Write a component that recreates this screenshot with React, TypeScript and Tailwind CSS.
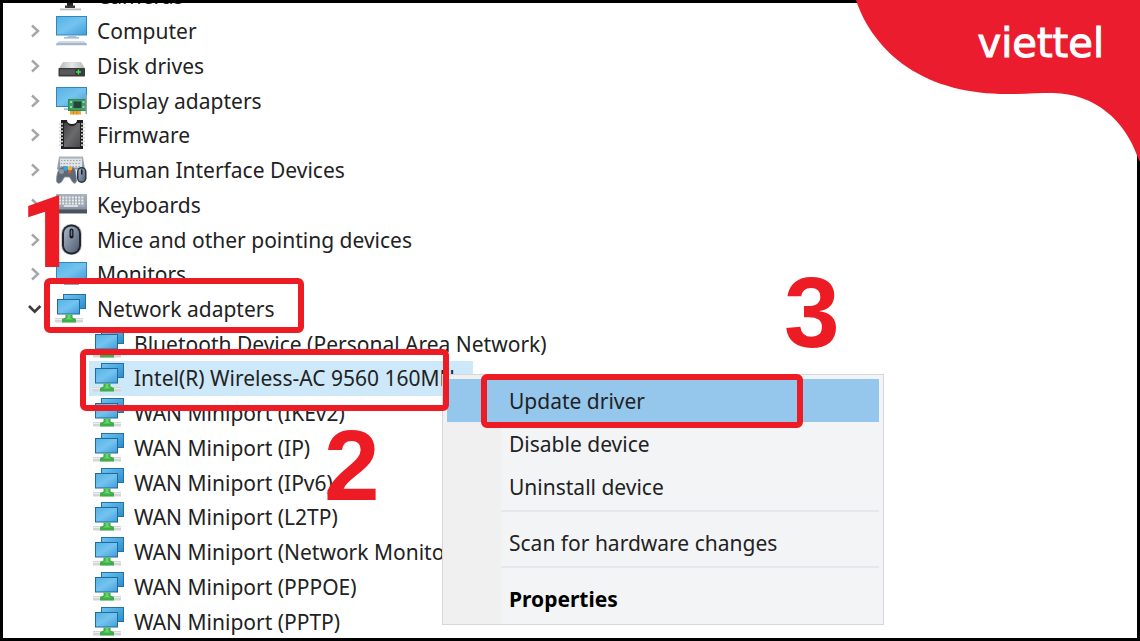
import React from "react";

const Defs = () => (
  <svg className="absolute size-0" aria-hidden="true">
    <defs>
      <linearGradient id="screen" x1="0" y1="0" x2="1" y2="1">
        <stop offset="0" stopColor="#56b4e6" />
        <stop offset="0.5" stopColor="#74c3ef" />
        <stop offset="1" stopColor="#429fda" />
      </linearGradient>
      <linearGradient id="back" x1="0" y1="0" x2="1" y2="1">
        <stop offset="0" stopColor="#6cc3ef" />
        <stop offset="1" stopColor="#2d8ccb" />
      </linearGradient>
      <linearGradient id="metal" x1="0" y1="0" x2="1" y2="0">
        <stop offset="0" stopColor="#b5b8ba" />
        <stop offset="0.5" stopColor="#e6e8e9" />
        <stop offset="1" stopColor="#b5b8ba" />
      </linearGradient>
      <linearGradient id="steel" x1="0" y1="0" x2="0" y2="1">
        <stop offset="0" stopColor="#a9b4be" />
        <stop offset="1" stopColor="#8793a0" />
      </linearGradient>
      <linearGradient id="mouse" x1="0" y1="0" x2="1" y2="1">
        <stop offset="0" stopColor="#a9b8c8" />
        <stop offset="1" stopColor="#4d5d70" />
      </linearGradient>
      <linearGradient id="chip" x1="0" y1="0" x2="1" y2="1">
        <stop offset="0" stopColor="#3f3f41" />
        <stop offset="0.5" stopColor="#6b6b6e" />
        <stop offset="1" stopColor="#4a4a4c" />
      </linearGradient>
    </defs>
  </svg>
);

const Icon = ({ children }: { children: React.ReactNode }) => (
  <svg viewBox="0 0 32 32" className="size-8 shrink-0" aria-hidden="true">
    {children}
  </svg>
);

const CameraIcon = () => (
  <Icon>
    <rect x="12" y="20" width="6" height="8" fill="#222" />
    <path d="M10 25.500h10v2.500h-10z" fill="#3a3a3a" />
    <path d="M5 28.500h21v1.800h-21z" fill="#b9bcbf" />
  </Icon>
);

const ComputerIcon = () => (
  <Icon>
    <rect x="1" y="1" width="31" height="19.500" fill="#3187bd" />
    <rect x="2" y="2" width="29" height="17.500" fill="url(#screen)" />
    <path d="M13 21h8l1 1.300h-10z" fill="#aac3d6" />
    <rect x="9" y="22.300" width="15" height="1.200" fill="#86a9c4" />
    <path d="M4 26.500h25l3 2.500v1.200h-31v-1.200z" fill="#a5b6ca" />
    <path d="M4 26.500h25l2 1.500h-29z" fill="#cdd8e4" />
  </Icon>
);

const DiskIcon = () => (
  <Icon>
    <path d="M8 12h18l4 6.500h-26z" fill="url(#metal)" />
    <rect x="3.500" y="18" width="26.500" height="8.500" rx="0.800" fill="#3a3b3c" />
    <rect x="5" y="19.300" width="15" height="5.500" fill="#575859" />
    <path d="M23.500 19.500v5M21 22h5" stroke="#3ee04a" strokeWidth="1.500" />
  </Icon>
);

const DisplayIcon = () => (
  <Icon>
    <rect x="1" y="2" width="31" height="20" fill="#3187bd" />
    <rect x="2" y="3" width="29" height="18" fill="url(#screen)" />
    <rect x="9" y="23.500" width="7" height="1.300" fill="#86a9c4" />
    <rect x="13" y="14" width="18" height="12" fill="#2f8a55" />
    <rect x="14" y="15" width="16" height="10" fill="#3da068" />
    <rect x="18.500" y="16.500" width="8" height="6.500" fill="#27433a" />
    <path d="M15 17h2M15 22h2M27.500 17h2M27.500 22h2" stroke="#b9e3c4" strokeWidth="1.500" />
    <rect x="15" y="26" width="11" height="3.500" fill="#f0a52e" />
    <path d="M18.500 26v3.500M22 26v3.500" stroke="#c97b18" strokeWidth="0.800" />
    <rect x="30.500" y="10" width="1.500" height="19" fill="#9aa2a6" />
  </Icon>
);

const FirmwareIcon = () => (
  <Icon>
    <path d="M6 1h6q0 4 5 4t5-4h6v29h-22z" fill="#202021" />
    <path d="M9 4h3q1.500 3 5 3t5-3h3v24h-16z" fill="url(#chip)" />
    <path
      d="M4 5h4M4 8.500h4M4 12h4M4 15.500h4M4 19h4M4 22.500h4M4 26h4M26 5h4M26 8.500h4M26 12h4M26 15.500h4M26 19h4M26 22.500h4M26 26h4"
      stroke="#d0d2d3"
      strokeWidth="1.400"
    />
  </Icon>
);

const HidIcon = () => (
  <Icon>
    <path d="M4 2.500h24l2 13h-28z" fill="url(#steel)" />
    <rect x="5" y="4.500" width="22" height="9" fill="#dfe3e6" />
    <path
      d="M6 6.500h20M5.500 9.500h21M5.500 12.500h21"
      stroke="#9ba6b0"
      strokeWidth="1"
      strokeDasharray="1.500 1.500"
    />
    <path
      d="M5 14q4-3 7 0q4-2 7 0q2 2 2.500 13q-1 4-4 1l-3-5h-5l-3 5q-4 3-5-1q0-9 3.500-13z"
      fill="#5d6976"
      stroke="#8793a0"
      strokeWidth="0.800"
    />
    <circle cx="6.500" cy="17.500" r="2.500" fill="#8b9aa9" />
    <circle cx="10.500" cy="14.500" r="2.400" fill="#36a0e0" />
    <circle cx="15" cy="14.500" r="2.200" fill="#f0b431" />
    <circle cx="14.500" cy="18" r="1.800" fill="#d9573b" />
    <rect x="22" y="13" width="9.500" height="16" rx="4.700" fill="#2c3541" />
    <rect x="23.500" y="14.500" width="6.500" height="13" rx="3.200" fill="url(#mouse)" />
    <rect x="26" y="15.500" width="1.600" height="5" fill="#1d242d" />
  </Icon>
);

const KeyboardIcon = () => (
  <Icon>
    <path d="M1 5h31v16h-31z" fill="url(#steel)" />
    <path d="M3 7h27v11h-27z" fill="#9faab4" />
    <g stroke="#eef1f3" strokeWidth="2" strokeDasharray="2 1.200">
      <path d="M4 8.500h25M4 11.500h25M4 14.500h25" />
    </g>
    <path d="M9 17h14" stroke="#eef1f3" strokeWidth="1.500" />
    <path d="M1 20.500h31v4h-31z" fill="#4b545e" />
  </Icon>
);

const MouseIcon = () => (
  <Icon>
    <rect x="6" y="0" width="21" height="31" rx="9.500" fill="#c9ccd0" />
    <rect x="7" y="0.500" width="19" height="30" rx="9" fill="#22262c" />
    <rect x="9" y="2.500" width="15" height="26" rx="7" fill="url(#mouse)" />
    <rect x="14.500" y="4.500" width="4" height="10" rx="2" fill="#171b21" />
    <rect x="15.800" y="6" width="1.400" height="6" rx="0.700" fill="#6d7d8f" />
  </Icon>
);

const MonitorIcon = () => (
  <Icon>
    <rect x="1" y="4" width="31" height="19.500" fill="#3187bd" />
    <rect x="2" y="5" width="29" height="17.500" fill="url(#screen)" />
    <rect x="9" y="25.500" width="15" height="1.500" fill="#86a9c4" />
  </Icon>
);

const NetworkIcon = () => (
  <Icon>
    <rect x="8" y="1" width="23" height="15" fill="#2272a8" />
    <rect x="9" y="2" width="21" height="13" fill="url(#back)" />
    <rect x="2" y="6" width="23" height="15.500" fill="#1f6a9e" />
    <rect x="3" y="7" width="21" height="13.500" fill="url(#screen)" />
    <rect x="0" y="25" width="28" height="4.500" fill="#d3d6d7" />
    <path d="M0 26.500h28" stroke="#eceeef" strokeWidth="1" />
    <path d="M10.500 21.500h7v3l3.500 1.500v3.500h-14v-3.500l3.500-1.500z" fill="#3fae49" />
    <path d="M12.500 22h3v3l2.500 1.500h-8l2.500-1.500z" fill="#69d26a" />
  </Icon>
);

const Chevron = ({ open }: { open?: boolean }) => (
  <svg viewBox="0 0 16 16" className="size-4" fill="none" aria-hidden="true">
    {open ? (
      <path d="M1 5l5.700 5.700L12.400 5" stroke="#3c3c3c" strokeWidth="2.600" />
    ) : (
      <path d="M4 2.500l6 5.500L4 13.500" stroke="#a6a6a6" strokeWidth="2.400" />
    )}
  </svg>
);

const categories: { label: string; Glyph: React.FC; open?: boolean }[] = [
  { label: "Cameras", Glyph: CameraIcon },
  { label: "Computer", Glyph: ComputerIcon },
  { label: "Disk drives", Glyph: DiskIcon },
  { label: "Display adapters", Glyph: DisplayIcon },
  { label: "Firmware", Glyph: FirmwareIcon },
  { label: "Human Interface Devices", Glyph: HidIcon },
  { label: "Keyboards", Glyph: KeyboardIcon },
  { label: "Mice and other pointing devices", Glyph: MouseIcon },
  { label: "Monitors", Glyph: MonitorIcon },
  { label: "Network adapters", Glyph: NetworkIcon, open: true },
];

const selected = "Intel(R) Wireless-AC 9560 160MHz";

const adapters = [
  "Bluetooth Device (Personal Area Network)",
  selected,
  "WAN Miniport (IKEv2)",
  "WAN Miniport (IP)",
  "WAN Miniport (IPv6)",
  "WAN Miniport (L2TP)",
  "WAN Miniport (Network Monitor)",
  "WAN Miniport (PPPOE)",
  "WAN Miniport (PPTP)",
];

const DeviceTree = () => (
  <ul className="-mt-[21px] grid h-[660px] auto-rows-fr pl-7">
    {categories.map(({ label, Glyph, open }) => (
      <li key={label} className="flex items-center">
        <button aria-label={label} aria-expanded={!!open} className="mr-[11px] flex">
          <Chevron open={open} />
        </button>
        <Glyph />
        <span className="pl-2.5 whitespace-nowrap">{label}</span>
      </li>
    ))}
    {adapters.map((label) => (
      <li key={label} className="flex items-center pl-[61px]">
        <span
          className={
            label === selected
              ? "flex h-full items-center bg-[#cde8f9] pr-2 pl-1"
              : "flex items-center pr-2 pl-1"
          }
        >
          <NetworkIcon />
          <span className="pl-[9px] whitespace-nowrap">{label}</span>
        </span>
      </li>
    ))}
  </ul>
);

const MenuItem = ({ label, className = "" }: { label: string; className?: string }) => (
  <button role="menuitem" className={`flex h-[43px] w-full items-center pl-[62px] text-left ${className}`}>
    {label}
  </button>
);

const Separator = () => <div role="separator" className="mt-0.5 mb-[9px] ml-[54px] h-0.5 bg-[#e5e7ea]" />;

const ContextMenu = () => (
  <div
    role="menu"
    className="absolute top-[374px] left-[442px] w-[442px] border border-[#d5d7da] bg-[linear-gradient(90deg,#f0f0f1_58px,#f3f4f6_58px)] p-1"
  >
    <MenuItem label="Update driver" className="bg-[#95c7ec]" />
    <MenuItem label="Disable device" />
    <MenuItem label="Uninstall device" />
    <Separator />
    <MenuItem label="Scan for hardware changes" />
    <Separator />
    <MenuItem label="Properties" className="font-bold text-black" />
  </div>
);

const Brand = () => (
  <div className="absolute top-0 right-0 h-[162px] w-[285px] pt-[23px] pr-9 text-right">
    <svg viewBox="0 0 285 162" className="absolute inset-0 size-full" aria-hidden="true">
      <path
        d="M1 0C9 25 27 50 52 67C80 86 115 94 152 94C170 94 182 93 198 93C240 94 270 120 283 158L285 162V0Z"
        fill="#eb1c2d"
      />
    </svg>
    <span className="relative font-['DejaVu_Sans',sans-serif] text-[40px] leading-10 text-white [-webkit-text-stroke:1px_white]">
      viettel
    </span>
  </div>
);

const Step = ({ n, className }: { n: string; className: string }) => (
  <span className={`absolute text-[100px] leading-none font-bold text-[#ed1c24] ${className}`}>{n}</span>
);

const Frame = ({ className }: { className: string }) => (
  <div className={`pointer-events-none absolute rounded-md border-[6px] border-[#ed1c24] ${className}`} />
);

export default function App() {
  return (
    <main className="relative flow-root h-screen w-full overflow-hidden bg-white font-['Noto_Sans',sans-serif] text-[21px] leading-8 text-[#222]">
      <Defs />
      <DeviceTree />
      <ContextMenu />
      <div className="pointer-events-none absolute inset-0 border-[3px] border-black" />
      <Brand />
      <Frame className="top-[278px] left-[44px] h-[55px] w-[260px]" />
      <Frame className="top-[349px] left-[80px] h-[62px] w-[369px]" />
      <Frame className="top-[374px] left-[481px] h-[54px] w-[322px]" />
      <Step n="1" className="top-[183px] left-5 font-['Roboto',sans-serif]" />
      <Step n="2" className="top-[415px] left-[324px] font-['Liberation_Sans',sans-serif]" />
      <Step n="3" className="top-[262px] left-[784px] font-['Liberation_Sans',sans-serif]" />
    </main>
  );
}
